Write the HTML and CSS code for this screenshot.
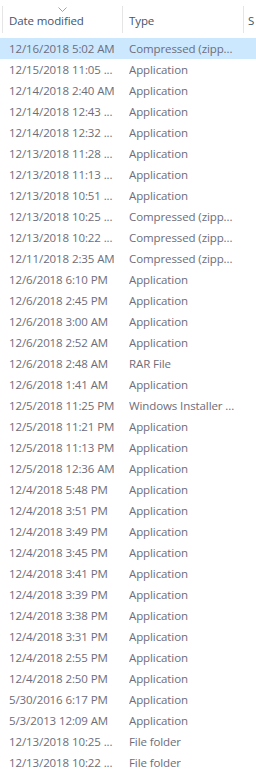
FILE: index.html
```html
<!DOCTYPE html>
<html>
<head>
<meta charset="utf-8">
<link rel="stylesheet" href="styles.css">
</head>
<body>
<div class="list">
  <div class="header">
    <div class="hcell c-date"><span class="sort"><svg width="9" height="5" viewBox="0 0 9 5"><path d="M0.5 0.5 L4.5 4.5 L8.5 0.5" fill="none" stroke="#9aa6b6" stroke-width="1"/></svg></span>Date modified</div>
    <div class="hcell c-type">Type</div>
    <div class="hcell c-size">S</div>
  </div>
  <div class="rows">
    <div class="row sel"><span class="c-date">12/16/2018 5:02 AM</span><span class="c-type">Compressed (zipp...</span></div>
    <div class="row"><span class="c-date">12/15/2018 11:05 ...</span><span class="c-type">Application</span></div>
    <div class="row"><span class="c-date">12/14/2018 2:40 AM</span><span class="c-type">Application</span></div>
    <div class="row"><span class="c-date">12/14/2018 12:43 ...</span><span class="c-type">Application</span></div>
    <div class="row"><span class="c-date">12/14/2018 12:32 ...</span><span class="c-type">Application</span></div>
    <div class="row"><span class="c-date">12/13/2018 11:28 ...</span><span class="c-type">Application</span></div>
    <div class="row"><span class="c-date">12/13/2018 11:13 ...</span><span class="c-type">Application</span></div>
    <div class="row"><span class="c-date">12/13/2018 10:51 ...</span><span class="c-type">Application</span></div>
    <div class="row"><span class="c-date">12/13/2018 10:25 ...</span><span class="c-type">Compressed (zipp...</span></div>
    <div class="row"><span class="c-date">12/13/2018 10:22 ...</span><span class="c-type">Compressed (zipp...</span></div>
    <div class="row"><span class="c-date">12/11/2018 2:35 AM</span><span class="c-type">Compressed (zipp...</span></div>
    <div class="row"><span class="c-date">12/6/2018 6:10 PM</span><span class="c-type">Application</span></div>
    <div class="row"><span class="c-date">12/6/2018 2:45 PM</span><span class="c-type">Application</span></div>
    <div class="row"><span class="c-date">12/6/2018 3:00 AM</span><span class="c-type">Application</span></div>
    <div class="row"><span class="c-date">12/6/2018 2:52 AM</span><span class="c-type">Application</span></div>
    <div class="row"><span class="c-date">12/6/2018 2:48 AM</span><span class="c-type">RAR File</span></div>
    <div class="row"><span class="c-date">12/6/2018 1:41 AM</span><span class="c-type">Application</span></div>
    <div class="row"><span class="c-date">12/5/2018 11:25 PM</span><span class="c-type">Windows Installer ...</span></div>
    <div class="row"><span class="c-date">12/5/2018 11:21 PM</span><span class="c-type">Application</span></div>
    <div class="row"><span class="c-date">12/5/2018 11:13 PM</span><span class="c-type">Application</span></div>
    <div class="row"><span class="c-date">12/5/2018 12:36 AM</span><span class="c-type">Application</span></div>
    <div class="row"><span class="c-date">12/4/2018 5:48 PM</span><span class="c-type">Application</span></div>
    <div class="row"><span class="c-date">12/4/2018 3:51 PM</span><span class="c-type">Application</span></div>
    <div class="row"><span class="c-date">12/4/2018 3:49 PM</span><span class="c-type">Application</span></div>
    <div class="row"><span class="c-date">12/4/2018 3:45 PM</span><span class="c-type">Application</span></div>
    <div class="row"><span class="c-date">12/4/2018 3:41 PM</span><span class="c-type">Application</span></div>
    <div class="row"><span class="c-date">12/4/2018 3:39 PM</span><span class="c-type">Application</span></div>
    <div class="row"><span class="c-date">12/4/2018 3:38 PM</span><span class="c-type">Application</span></div>
    <div class="row"><span class="c-date">12/4/2018 3:31 PM</span><span class="c-type">Application</span></div>
    <div class="row"><span class="c-date">12/4/2018 2:55 PM</span><span class="c-type">Application</span></div>
    <div class="row"><span class="c-date">12/4/2018 2:50 PM</span><span class="c-type">Application</span></div>
    <div class="row"><span class="c-date">5/30/2016 6:17 PM</span><span class="c-type">Application</span></div>
    <div class="row"><span class="c-date">5/3/2013 12:09 AM</span><span class="c-type">Application</span></div>
    <div class="row"><span class="c-date">12/13/2018 10:25 ...</span><span class="c-type">File folder</span></div>
    <div class="row"><span class="c-date">12/13/2018 10:22 ...</span><span class="c-type">File folder</span></div>
  </div>
</div>
</body>
</html>
```
FILE: styles.css
```css
html, body {
  margin: 0;
  padding: 0;
  background: #ffffff;
  overflow: hidden;
}
body {
  font-family: "Open Sans", "Noto Sans", sans-serif;
  font-size: 11.5px;
  letter-spacing: -0.1px;
  width: 256px;
  height: 770px;
}
.list {
  display: flex;
  flex-direction: column;
}
.header {
  display: flex;
  height: 38px;
  align-items: stretch;
  padding-left: 2px;
}
.hcell {
  position: relative;
  display: flex;
  align-items: center;
  color: #42546e;
  border-left: 1px solid #e5e5e5;
  box-sizing: border-box;
  margin-top: 6px;
  margin-bottom: 5px;
  padding-top: 2px;
  white-space: nowrap;
  overflow: hidden;
}
.hcell.c-date {
  width: 120px;
  padding-left: 6px;
}
.hcell.c-type {
  width: 121px;
  padding-left: 6px;
}
.hcell.c-size {
  flex: 1;
  padding-left: 4px;
}
.sort {
  position: absolute;
  left: 55px;
  top: 1px;
  line-height: 0;
}
.rows {
  display: flex;
  flex-direction: column;
}
.row {
  display: flex;
  height: 21px;
  align-items: center;
  color: #6d6d7a;
  white-space: nowrap;
}
.row.sel {
  background: #cce8ff;
}
.row .c-date {
  width: 120px;
  padding-left: 9px;
  overflow: hidden;
}
.row .c-type {
  padding-left: 0;
  overflow: hidden;
}
```
